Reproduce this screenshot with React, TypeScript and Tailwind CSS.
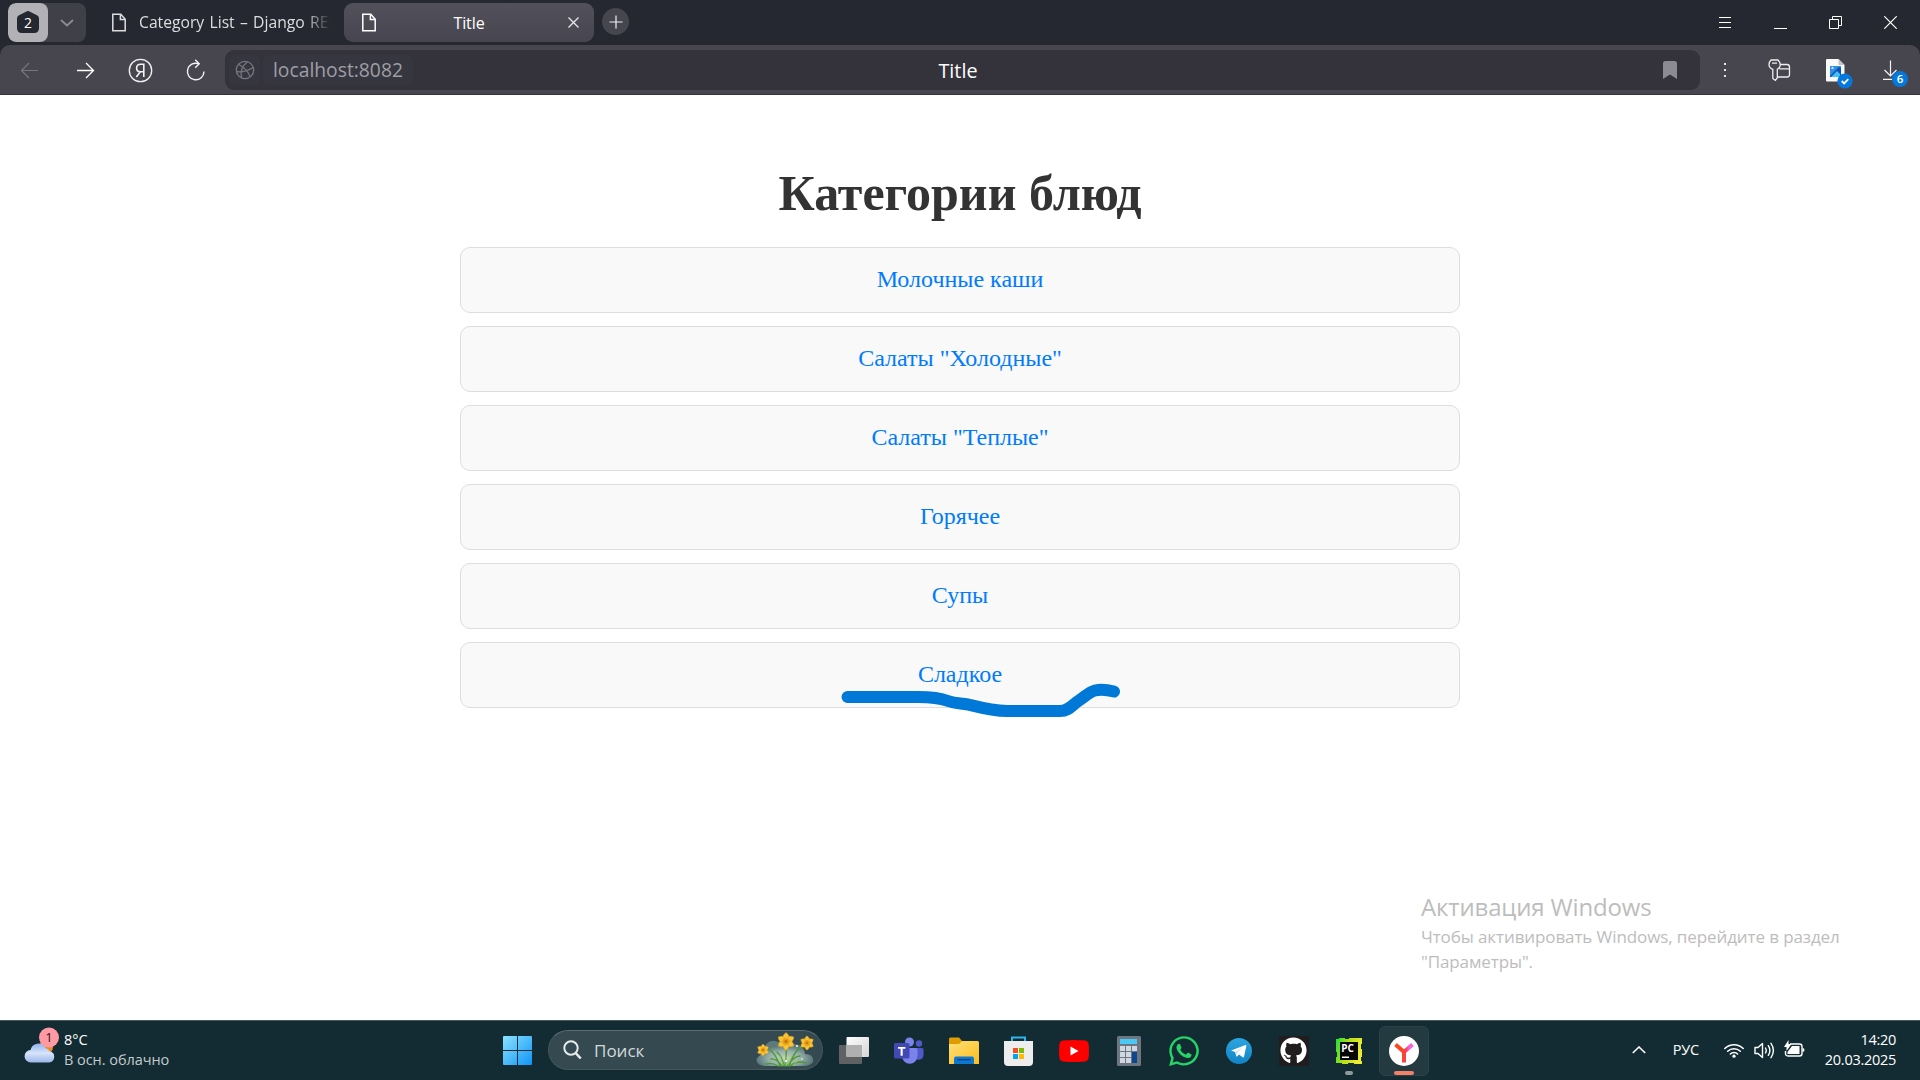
import type { ReactNode } from "react";
import { FaGithub, FaWhatsapp } from "react-icons/fa6";

const ui = "font-['Open_Sans','Noto_Sans',sans-serif]";

function PageIcon() {
  return (
    <svg width="14" height="19" viewBox="0 0 14 19" fill="none" stroke="currentColor" strokeWidth="1.5">
      <path d="M.8 1.2h8l4.4 5v11.6H.8z" />
      <path d="M8.4 1.4v5.2h4.6" />
    </svg>
  );
}

function TabStrip() {
  return (
    <div className="flex h-[45px] items-start bg-[#252830] pt-[3px] text-white">
      <div className="ml-2 flex h-[39px] w-[78px] overflow-hidden rounded-lg bg-[#3f4048]">
        <div className="flex w-10 items-center justify-center rounded-lg bg-[#b1b1b6]">
          <div className="grid">
            <svg className="col-start-1 row-start-1" width="22" height="22" viewBox="0 0 22 22">
              <path d="M11 0Q12 0 13 .7L20 4.200Q22 5.300 22 7.500V17Q22 22 17 22H5Q0 22 0 17V7.500Q0 5.300 2 4.200L9 .7Q10 0 11 0z" fill="#252830" />
            </svg>
            <span className={`${ui} col-start-1 row-start-1 text-center text-[14px] leading-[23px]`}>2</span>
          </div>
        </div>
        <div className="flex flex-1 items-center justify-center">
          <svg width="14" height="8" viewBox="0 0 14 8" fill="none" stroke="#8d8d93" strokeWidth="1.7"><path d="M1 1l6 5.500L13 1" /></svg>
        </div>
      </div>
      <div className="ml-[18px] flex h-[39px] w-[240px] items-center pl-2 text-[#dededf]">
        <PageIcon />
        <div className={`${ui} mt-px ml-[13px] w-[196px] overflow-hidden text-[15.700px] whitespace-nowrap [mask-image:linear-gradient(to_right,black_84%,transparent_98%)]`}>
          <span className="[word-spacing:1.2px]">Category List – Django RES</span>
        </div>
      </div>
      <div className="flex h-[39px] w-[250px] items-center rounded-[9px] bg-linear-to-b from-[#52515b] to-[#474650] pl-[18px]">
        <PageIcon />
        <div className={`${ui} flex-1 pr-[6px] text-center text-[16px] text-white`}><span className="tracking-[-0.1px]">Title</span></div>
        <svg className="mr-[15px]" width="11" height="11" viewBox="0 0 11 11" stroke="#e8e8ea" strokeWidth="1.300"><path d="M.5.5l10 10M10.500.5l-10 10" /></svg>
      </div>
      <div className="mt-[5px] ml-2 flex h-[27px] w-[27px] items-center justify-center rounded-full bg-[#46464e]">
        <svg width="14" height="14" viewBox="0 0 14 14" stroke="#f0f0f0" strokeWidth="1.200"><path d="M7 .5v13M.5 7h13" /></svg>
      </div>
      <div className="mt-[13px] mr-[23px] ml-auto flex items-start">
        <svg width="12" height="13" viewBox="0 0 12 13" stroke="#fff" strokeWidth="1"><path d="M0 1.500h12M0 6.500h12M0 11.500h12" /></svg>
        <svg className="ml-[43px]" width="13" height="13" viewBox="0 0 13 13" stroke="#fff"><path d="M0 12.500h13" /></svg>
        <svg className="ml-[42px]" width="13" height="13" viewBox="0 0 13 13" fill="none" stroke="#fff"><path d="M.5 3.500h9v9h-9zM3.500 3V.5h9v9H10" /></svg>
        <svg className="ml-[42px]" width="13" height="13" viewBox="0 0 13 13" stroke="#fff" strokeWidth="1.200"><path d="M.3.3l12.400 12.400M12.700.3L.3 12.700" /></svg>
      </div>
    </div>
  );
}

function Toolbar() {
  return (
    <div className="bg-[#252830]">
      <div className="flex h-[50px] items-center rounded-t-[10px] border-b border-[#35343c] bg-[#47464f] pt-px text-white">
        <svg className="ml-[20px]" width="19" height="17" viewBox="0 0 19 17" fill="none" stroke="#77767e" strokeWidth="1.200"><path d="M18 8.500H1.500M9 1L1.500 8.500 9 16" /></svg>
        <svg className="ml-[37px]" width="19" height="17" viewBox="0 0 19 17" fill="none" stroke="#fff" strokeWidth="1.300"><path d="M1 8.500h16.500M10 1l7.500 7.500L10 16" /></svg>
        <svg className="ml-[33px]" width="25" height="25" viewBox="0 0 25 25" fill="none" stroke="#f2f2f2" strokeWidth="1.300">
          <circle cx="12.500" cy="12.500" r="11.200" />
          <path d="M15.800 19V6.200h-3.200c-2.300 0-4 1.500-4 3.900 0 2.200 1.500 3.700 3.700 3.700h3.400M12.300 13.800L8.300 19" strokeWidth="1.600" />
        </svg>
        <svg className="ml-[33px]" width="20" height="22" viewBox="0 0 20 22" fill="none" stroke="#f2f2f2" strokeWidth="1.400">
          <path d="M18 12.500A8.300 8.300 0 1 1 12.500 4.700M9.200.7l4 4-4 4" />
        </svg>
        <div className="ml-[19px] flex h-10 w-[1475px] items-center rounded-[9px] bg-[#34333c]">
          <div className="ml-1 flex h-[30px] w-[31px] items-center justify-center rounded-md bg-[#363640]">
            <svg width="20" height="20" viewBox="0 0 20 20" fill="none" stroke="#77767f" strokeWidth="1.300">
              <circle cx="10" cy="10" r="8.700" />
              <path d="M12.500 1.700C7 6 5 11 6.500 17.800M3.500 4.300C8 7 14 12 15 17M1.500 11.500C8 13 14 10 18.300 7.500" />
            </svg>
          </div>
          <div className={`${ui} ml-[3px] flex h-[30px] w-[150px] items-center rounded-md bg-[#363640] pt-px pl-[10px] text-[19.300px] text-[#9f9fa4]`}>localhost:8082</div>
          <div className={`${ui} w-[1090px] pt-px text-center text-[19.800px] text-white`}>Title</div>
          <svg className="mr-[23px] ml-auto" width="14" height="18" viewBox="0 0 14 18"><path d="M0 2.500Q0 0 2.500 0h9Q14 0 14 2.500V18l-7-4.500L0 18z" fill="#8c8b91" /></svg>
        </div>
        <svg className="ml-[24px]" width="2" height="16" viewBox="0 0 2 16" fill="#e5e5e5"><path d="M0 1h2v2H0zM0 7h2v2H0zM0 13h2v2H0z" /></svg>
        <svg className="ml-[42px]" width="23" height="23" viewBox="0 0 23 23" fill="none" stroke="#eee" strokeWidth="1.300">
          <path d="M3 1h7q2.300 2 2.300 5 0 2.500-3 4.300V19l-2 2.400-2.500-2V10.300Q1 9 1 5.500 1 3 3 1zM4 4.200h5M12 5.500h7q2.500 0 2.500 2.500v7.500Q21.500 18 19 18h-9.500M11.500 9.800h10" />
        </svg>
        <div className="relative ml-[35px] h-[23px] w-[19px]">
          <svg width="19" height="23" viewBox="0 0 19 23">
            <path d="M0 1Q0 0 1 0h11.500l6 6v15q0 1.500-1 1.500H1q-1 0-1-1z" fill="#fafafa" />
            <path d="M12.500 0l6 6h-6z" fill="#c4c4c8" />
            <path d="M4 7h11v11H4z" fill="#2f8de4" /><path d="M4 17L13 8l2 1v9H4z" fill="#0c4fb8" /><path d="M5 18l6-6 3 3v3z" fill="#42c0f4" /><circle cx="6.500" cy="9" r="1.200" fill="#b8e8ff" />
          </svg>
          <svg className="absolute top-[14px] left-[11px]" width="16" height="16" viewBox="0 0 16 16"><circle cx="8" cy="8" r="7.600" fill="#0478dc" /><path d="M4.700 8l2.400 2.400 4.200-4.300" fill="none" stroke="#fff" strokeWidth="1.800" /></svg>
        </div>
        <div className="relative ml-[38px] h-[22px] w-[15px]">
          <svg width="15" height="22" viewBox="0 0 15 22" fill="none" stroke="#f4f4f4" strokeWidth="1.200"><path d="M7.500 1.500v16M1.500 11l6 6 6-6M0 20.400h9" /></svg>
          <span className={`${ui} absolute top-[12px] left-[9px] h-4 w-4 rounded-full bg-[#0478dc] text-center text-[11.500px] leading-4 font-semibold text-white`}>6</span>
        </div>
      </div>
    </div>
  );
}

const categories = ["Молочные каши", 'Салаты "Холодные"', 'Салаты "Теплые"', "Горячее", "Супы", "Сладкое"];

function Page() {
  return (
    <main className="relative flex h-[925px] flex-col items-center bg-white font-['Liberation_Serif',serif]">
      <h1 className="mt-[69px] text-[50px] leading-[58px] font-bold text-[#333]">Категории блюд</h1>
      <ul className="mt-[25px] flex w-[1000px] flex-col gap-[13px]">
        {categories.map((name) => (
          <li key={name} className="flex h-[66px] items-center justify-center rounded-[10px] border border-[#ddd] bg-[#f9f9f9] pb-[2px] text-[24px] text-[#007bff]">
            {name}
          </li>
        ))}
      </ul>
      <svg className="absolute top-[585px] left-[835px]" width="300" height="45" viewBox="835 680 300 45" fill="none" stroke="#0078d7" strokeWidth="12" strokeLinecap="round" strokeLinejoin="round">
        <path d="M847.500 697H918C930 697 940 698 948 701S960 703 968 704.500C982 708 993 711 1007 711H1060C1069 711 1072 705 1079 700.500S1089 692 1095 690.500S1108 690 1114 691.500" />
      </svg>
      <div className={`${ui} absolute top-[796px] left-[1421px] whitespace-nowrap text-[#bdbdbd]`}>
        <div className="text-[24px] leading-8 tracking-[-0.15px]">Активация Windows</div>
        <div className="pt-px text-[17px] leading-[25px] tracking-[-0.1px]">Чтобы активировать Windows, перейдите в раздел<br />"Параметры".</div>
      </div>
    </main>
  );
}

function Slot({ children }: { children: ReactNode }) {
  return <div className="flex h-full w-[55px] items-center justify-center">{children}</div>;
}

function Flower({ x, y, s }: { x: number; y: number; s: number }) {
  return (
    <g transform={`translate(${x} ${y}) scale(${s})`}>
      {[0, 60, 120, 180, 240, 300].map((a) => (
        <path key={a} d="M0 0Q-6-4.500 0-9 6-4.500 0 0z" fill="#f6c437" stroke="#dfa01c" strokeWidth=".5" transform={`rotate(${a})`} />
      ))}
      <circle r="3.600" fill="#eba01a" /><circle r="1.700" fill="#c9780c" />
    </g>
  );
}

function Taskbar() {
  return (
    <footer className={`${ui} flex h-[60px] border-t border-[#46575c] bg-[#132c33] text-white`}>
      <div className="flex w-[490px] items-start">
        <svg className="mt-[6px] ml-[24px]" width="36" height="38" viewBox="0 0 36 38">
          <defs><linearGradient id="cloud" x2="0" y2="1"><stop stopColor="#8fb4f0" /><stop offset=".5" stopColor="#d8e4fa" /><stop offset="1" stopColor="#9bb8ea" /></linearGradient></defs>
          <circle cx="22" cy="20" r="7" fill="#f08a24" />
          <path d="M7 35.500a6.200 6.200 0 0 1-.5-12.400A8 8 0 0 1 21.500 21a6 6 0 0 1 4 3.200A5.700 5.700 0 0 1 25 35.500z" fill="url(#cloud)" />
          <circle cx="25" cy="10.500" r="10" fill="#ff99a4" />
          <text x="25" y="15" textAnchor="middle" fontSize="13" fill="#2b1416">1</text>
        </svg>
        <div className="mt-[9px] ml-[4px] text-[14.500px] leading-5 tracking-[-0.05px]"><div>8°C</div><div className="text-[#c3cbcd]">В осн. облачно</div></div>
      </div>
      <Slot>
        <svg width="29" height="29" viewBox="0 0 29 29"><defs><linearGradient id="win" x2="1" y2="1"><stop stopColor="#8be3ff" /><stop offset="1" stopColor="#0f94f5" /></linearGradient></defs><path d="M0 1q0-1 1-1h13v14H0zM15 0h13q1 0 1 1v13H15zM0 15h14v14H1q-1 0-1-1zM15 15h14v13q0 1-1 1H15z" fill="url(#win)" /></svg>
      </Slot>
      <div className="mt-[9px] ml-[3px] flex h-10 w-[275px] items-center rounded-full border border-[#43565b] border-t-[#5d6d71] bg-[#344950]">
        <svg className="ml-[14px]" width="19" height="20" viewBox="0 0 19 20" fill="none" stroke="#e6eaeb" strokeWidth="2"><circle cx="8" cy="8" r="6.700" /><path d="M12.700 13l5 5.500" strokeWidth="2.600" /></svg>
        <span className="mt-px ml-[12px] text-[17px] text-[#d3d9da]">Поиск</span>
        <svg className="mr-[8px] ml-auto" width="58" height="36" viewBox="0 0 58 36">
          <defs><radialGradient id="mist" cy=".7"><stop stopColor="#c3d3c0" /><stop offset=".6" stopColor="#93ada8" /><stop offset="1" stopColor="#6f8e90" stopOpacity=".7" /></radialGradient></defs>
          <path d="M4 33Q-2 29 2 25 6 22 8 16 13 6 22 10 30 6 38 12 48 12 49 22 58 22 57 30 54 34 48 34H8z" fill="url(#mist)" />
          <g fill="none" stroke="#4d9a38" strokeWidth="1.400" strokeLinecap="round"><path d="M24 34Q20 22 13 17M29 34Q31 20 30 14M33 34Q38 18 48 13M26 34Q20 26 15 27M28 34Q26 24 21 20M31 34Q38 24 44 24M34 34Q42 28 50 31M22 34Q16 30 10 32" /></g>
          <g fill="none" stroke="#8cc850" strokeLinecap="round"><path d="M27 33L24 24M32 33l4-9M30 33v-9M37 33l6-5" /></g>
          <g fill="#fff"><circle cx="30" cy="29" r="1" /><circle cx="41" cy="14" r="1" /><circle cx="46" cy="27" r=".8" /></g>
          <Flower x={30} y={9.500} s={1} /><Flower x={7} y={18} s={0.68} /><Flower x={51} y={11} s={0.8} />
        </svg>
      </div>
      <div className="ml-[3px] flex">
        <Slot><svg width="30" height="30" viewBox="0 0 30 30"><defs><linearGradient id="tv" x2="1" y2="1"><stop stopColor="#fff" /><stop offset="1" stopColor="#d5d5d5" /></linearGradient></defs><rect y="9" width="23" height="19" rx="1" fill="#5f6162" /><rect x="7.500" y="1" width="22.500" height="20" rx="1" fill="url(#tv)" /><path d="M7.500 9H23v12H7.500z" fill="#b0b0b0" /></svg></Slot>
        <Slot><svg width="30" height="30" viewBox="0 0 30 30"><circle cx="25" cy="7.500" r="3.200" fill="#5059c9" /><path d="M20 12h8q1.500 0 1.500 1.500V19a5 5 0 0 1-9.500 2z" fill="#5059c9" /><circle cx="15.500" cy="6" r="4.500" fill="#7b83eb" /><path d="M8 12h14q1.500 0 1.500 1.500V20a7.700 7.700 0 0 1-15.500 0z" fill="#7b83eb" /><rect y="7" width="15.500" height="15.500" rx="1.500" fill="#4249b3" /><path d="M4 11h7.400v1.800H8.700v7H6.600v-7H4z" fill="#fff" /></svg></Slot>
        <Slot><svg width="30" height="28" viewBox="0 0 30 28"><defs><linearGradient id="fd" x2="1" y2="1"><stop stopColor="#ffe07a" /><stop offset="1" stopColor="#fbbd1c" /></linearGradient></defs><path d="M0 2q0-1.500 1.500-1.500H10L13 4v6H0z" fill="#e09c00" /><path d="M0 7h10l3-3h15.500Q30 4 30 5.500V27H0z" fill="url(#fd)" /><path d="M5 27v-5.500q0-2 2-2h16q2 0 2 2V27z" fill="#0e78cf" /><path d="M8.500 22.700h13" stroke="#063f80" strokeWidth="1.200" /></svg></Slot>
        <Slot><svg width="29" height="30" viewBox="0 0 29 30"><path d="M8 6V1.500h13V6" fill="none" stroke="#2bb4f0" strokeWidth="2" /><path d="M0 5h29v21q0 4-4 4H4q-4 0-4-4z" fill="#ededed" /><path d="M9 12h5v5H9z" fill="#f25022" /><path d="M15 12h5v5h-5z" fill="#7fba00" /><path d="M9 18h5v5H9z" fill="#00a4ef" /><path d="M15 18h5v5h-5z" fill="#ffb900" /></svg></Slot>
        <Slot><svg width="30" height="22" viewBox="0 0 30 22"><path d="M4 .6Q15-.5 26 .6 29.500 1 29.700 5 30.200 11 29.700 17 29.500 21 26 21.400 15 22.500 4 21.400.5 21 .3 17-.2 11 .3 5 .5 1 4 .6z" fill="#fe0000" /><path d="M11.500 6.500l8 4.500-8 4.500z" fill="#fff" /></svg></Slot>
        <Slot><svg width="24" height="30" viewBox="0 0 24 30"><rect width="24" height="30" rx="1.500" fill="#6e7681" /><path d="M3 3h17v5H3z" fill="#4cc8f5" /><path d="M3 10h5v5H3zM9 10h5v5H9zM15 10h5v5h-5zM3 16h5v5H3zM9 16h5v5H9zM3 22h5v5H3zM9 22h5v5H9z" fill="#cfd8e2" /><path d="M15 16h5v11h-5z" fill="#0e478c" /></svg></Slot>
        <Slot><FaWhatsapp className="size-[34px] text-[#25d366]" /></Slot>
        <Slot><svg width="26" height="26" viewBox="0 0 26 26"><defs><linearGradient id="tg" x2="0" y2="1"><stop stopColor="#2da5e0" /><stop offset="1" stopColor="#1284c6" /></linearGradient></defs><circle cx="13" cy="13" r="13" fill="url(#tg)" /><path d="M5 12.600L19.500 7q1-.2.800 1L18 18.700q-.3 1.200-1.300.6L13 16.500l-2 2q-.6.500-.8-.5l-1-4z" fill="#fff" /><path d="M9.300 14l7.500-4.700-6 5.600-.4 3z" fill="#c3dff0" /></svg></Slot>
        <Slot><div className="flex size-[30px] items-center justify-center bg-[#211c1e]"><FaGithub className="size-[27px] text-white" /></div></Slot>
        <Slot>
          <div className="relative">
            <svg width="26" height="26" viewBox="0 0 26 26"><defs><linearGradient id="pc" x2="1" y2=".3"><stop stopColor="#1ce03c" /><stop offset=".5" stopColor="#b4e010" /><stop offset="1" stopColor="#ecea30" /></linearGradient></defs><path d="M0 1h3V0h6v1h4V0h13v6h-1v5h1v8h-1v4h1v3h-8v-1h-6v1H6v-1H0v-6h1v-5H0z" fill="url(#pc)" /><path d="M4 4h18v18H4z" fill="#060606" /><path d="M6 18.500h7v1.500H6z" fill="#fff" /><text x="5.200" y="13.500" fontSize="10" fontWeight="700" fill="#fff">PC</text></svg>
            <span className="absolute top-[33px] left-[9px] h-1 w-2 rounded-full bg-[#8f9a9d]" />
          </div>
        </Slot>
        <Slot>
          <div className="relative flex size-[50px] items-center justify-center rounded-md border border-[#2b4148] bg-[#233a41]">
            <svg width="30" height="30" viewBox="0 0 30 30"><defs><linearGradient id="ya" x1="0" x2="1" y1="0" y2="0"><stop offset=".3" stopColor="#fa4a1c" /><stop offset=".6" stopColor="#f8404c" /><stop offset=".8" stopColor="#fb5fe0" /></linearGradient></defs><circle cx="15" cy="15" r="15" fill="#fff" /><path d="M6.500 8.500L15 16v10.500M15 16l8.500-7.500" fill="none" stroke="url(#ya)" strokeWidth="4" /></svg>
            <span className="absolute top-[44px] left-[14px] h-1 w-5 rounded-full bg-[#f4806a]" />
          </div>
        </Slot>
      </div>
      <div className="mr-[24px] ml-auto flex items-center pb-px">
        <svg width="14" height="8" viewBox="0 0 14 8" fill="none" stroke="#fff" strokeWidth="1.600"><path d="M.8 7L7 1l6.200 6" /></svg>
        <span className="ml-[27px] text-[14.500px] tracking-[-0.2px]">РУС</span>
        <svg className="ml-[25px]" width="20" height="15" viewBox="0 0 20 15" fill="none" stroke="#fff" strokeWidth="1.500" strokeLinecap="round"><path d="M.8 5.500a13 13 0 0 1 18.400 0M3.700 8.300a9 9 0 0 1 12.600 0M6.400 11a5 5 0 0 1 7.200 0" /><circle cx="10" cy="13.200" r="1.600" fill="#fff" stroke="none" /></svg>
        <svg className="ml-[10px]" width="21" height="17" viewBox="0 0 21 17" fill="none" stroke="#fff" strokeWidth="1.400" strokeLinejoin="round" strokeLinecap="round"><path d="M1 5.500h3L8.500 1.500v14L4 11.500H1zM11.500 6q1.500 2.500 0 5M14.300 3.700q3.200 4.800 0 9.600M17 1.300q4.800 7.200 0 14.400" /></svg>
        <svg className="mb-[2px] ml-[9px]" width="21" height="18" viewBox="0 0 21 18"><path d="M6 4h9.500Q18 4 18 6.500v7q0 2.500-2.500 2.500H4q-2.500 0-2.500-2.500V11" fill="none" stroke="#fff" strokeWidth="1.400" /><path d="M8 6h7.500v8H3.500v-2zM18.500 8q2 0 2 2t-2 2z" fill="#fff" /><path d="M4.500 0v4h3L2.500 11V7H0z" fill="#fff" /></svg>
        <div className="ml-[20px] pb-px text-right text-[14.500px] leading-5 tracking-[-0.28px]"><div>14:20</div><div>20.03.2025</div></div>
      </div>
    </footer>
  );
}

export default function App() {
  return (
    <div className="h-[1080px] w-[1920px] overflow-hidden bg-white">
      <TabStrip />
      <Toolbar />
      <Page />
      <Taskbar />
    </div>
  );
}
